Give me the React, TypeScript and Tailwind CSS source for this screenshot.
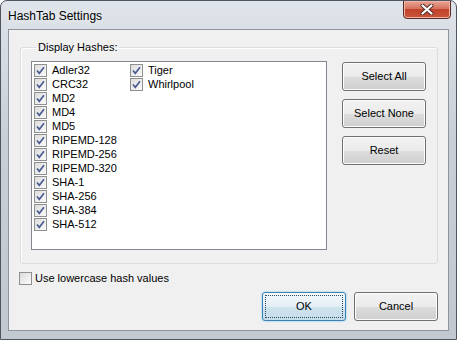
import React, { useState } from "react";

const hashes = [
    "Adler32",
    "CRC32",
    "MD2",
    "MD4",
    "MD5",
    "RIPEMD-128",
    "RIPEMD-256",
    "RIPEMD-320",
    "SHA-1",
    "SHA-256",
    "SHA-384",
    "SHA-512",
    "Tiger",
    "Whirlpool",
];

function Check({ checked }: { checked: boolean }) {
    return (
        <span className="w-[13px] h-[13px] shrink-0 border border-[#8e8f8f] bg-gradient-to-br from-[#dcdcdc] to-[#fbfbfb] flex items-center justify-center">
            {checked && (
                <svg width="11" height="11" viewBox="0 0 11 11">
                    <path
                        d="M2 5.5 L4.3 8.3 L9 2.3"
                        fill="none"
                        stroke="#4a5e93"
                        strokeWidth="1.7"
                    />
                </svg>
            )}
        </span>
    );
}

function Button({
    label,
    primary,
    className = "",
}: {
    label: string;
    primary?: boolean;
    className?: string;
}) {
    return primary ? (
        <div
            className={`h-[29px] rounded-[3px] border border-[#3c7fb1] bg-[linear-gradient(#f3f9fc_0%,#e4eff5_50%,#cfe3ee_51%,#c5dce9_100%)] shadow-[0_0_2px_#5fc1f0] p-[2px] ${className}`}
        >
            <div className="w-full h-full border border-dotted border-[#2a4b63] flex items-center justify-center text-[11px] text-black">
                {label}
            </div>
        </div>
    ) : (
        <div
            className={`h-[29px] rounded-[3px] border border-[#707070] bg-[linear-gradient(#f2f2f2_0%,#ebebeb_50%,#dddddd_51%,#cfcfcf_100%)] shadow-[inset_0_0_0_1px_#fcfcfc] flex items-center justify-center text-[11px] text-black ${className}`}
        >
            {label}
        </div>
    );
}

export default function App() {
    const [lower] = useState<boolean>(false);

    return (
        <div className="w-[457px] h-[340px] flex flex-col rounded-t-[7px] border border-[#4d5660] bg-[linear-gradient(180deg,#dfe4ea_0%,#c9cfd6_40%,#c2c8cf_100%)] font-['Liberation_Sans',Arial,sans-serif] overflow-hidden">
            <div className="h-[28px] flex items-start justify-between pl-[7px] pr-[5px]">
                <div className="mt-[6px] text-[12px] text-black [text-shadow:0_0_6px_#ffffff]">
                    HashTab Settings
                </div>
                <div className="w-[48px] h-[19px] -mt-px rounded-b-[4px] border border-[#5b2a22] bg-[linear-gradient(#e8a594_0%,#d5735d_45%,#c2422b_50%,#c9543a_100%)] shadow-[inset_0_0_0_1px_#efb4a6] flex items-center justify-center">
                    <svg width="14" height="11" viewBox="0 0 14 11">
                        <path
                            d="M2.5 1.5 L11.5 9.5 M11.5 1.5 L2.5 9.5"
                            stroke="#4a2620"
                            strokeWidth="4"
                            strokeLinecap="round"
                        />
                        <path
                            d="M2.5 1.5 L11.5 9.5 M11.5 1.5 L2.5 9.5"
                            stroke="#ffffff"
                            strokeWidth="2.3"
                            strokeLinecap="round"
                        />
                    </svg>
                </div>
            </div>

            <div className="flex-1 mx-[7px] mb-[8px] border border-[#8d949b] bg-[#f0f0f0] flex flex-col pl-[11px] pr-[10px] pt-[10px] text-[11px] text-black">
                <fieldset className="border border-[#d9dee2] rounded-[3px] shadow-[inset_1px_1px_0_#ffffff] pb-[13px] pl-[10px] pr-[10px]">
                    <legend className="ml-[5px] px-[2px] leading-[14px]">
                        Display Hashes:
                    </legend>
                    <div className="flex mt-[7px] gap-[15px]">
                        <div className="w-[296px] h-[189px] border border-[#828790] bg-white pt-[1px] pl-[1px]">
                            <div className="grid grid-flow-col grid-rows-[repeat(12,14px)] auto-cols-[96px]">
                                {hashes.map((h) => (
                                    <div key={h} className="flex items-center gap-[5px] pl-px">
                                        <Check checked={true} />
                                        <span className="leading-[14px]">{h}</span>
                                    </div>
                                ))}
                            </div>
                        </div>
                        <div className="w-[84px] flex flex-col gap-[8px] mt-px">
                            <Button label="Select All" />
                            <Button label="Select None" />
                            <Button label="Reset" />
                        </div>
                    </div>
                </fieldset>

                <div className="flex items-center gap-[3px] mt-[8px] -ml-px leading-[13px]">
                    <Check checked={lower} />
                    <span>Use lowercase hash values</span>
                </div>

                <div className="flex justify-end gap-[8px] mt-[7px]">
                    <Button label="OK" primary className="w-[84px]" />
                    <Button label="Cancel" className="w-[84px]" />
                </div>
            </div>
        </div>
    );
}
